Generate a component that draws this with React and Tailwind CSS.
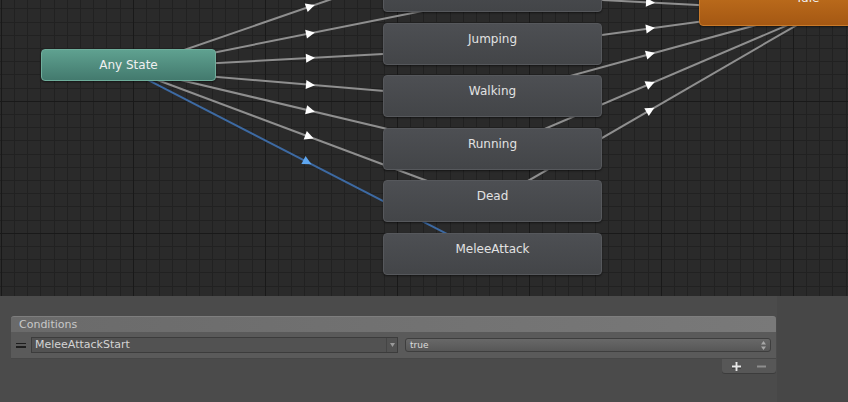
import React from "react";

const LINES = [
  // [px, py, slope, x1, x2, arrowX, color, arrowColor]
  [187, 49, -0.345, 150, 420, 310, "#8f8f8f", "#ffffff"],
  [217, 52, -0.2, 150, 440, 310, "#8f8f8f", "#ffffff"],
  [217, 63, -0.054, 150, 420, 310, "#8f8f8f", "#ffffff"],
  [217, 77, 0.084, 150, 420, 310, "#8f8f8f", "#ffffff"],
  [300, 108.3, 0.237, 150, 420, 310, "#8f8f8f", "#ffffff"],
  [160, 81, 0.374, 150, 440, 309, "#8f8f8f", "#ffffff"],
  [150, 81, 0.515, 140, 460, 307, "#3d6aa3", "#5ea6f0"],
  [602, 0, 0.052, 492, 760, 650, "#8f8f8f", "#ffffff"],
  [602, 35, -0.136, 492, 760, 650, "#8f8f8f", "#ffffff"],
  [580, 73.3, -0.274, 492, 770, 650, "#8f8f8f", "#ffffff"],
  [547, 128, -0.428, 492, 800, 650, "#8f8f8f", "#ffffff"],
  [602, 138, -0.58, 492, 805, 650, "#8f8f8f", "#ffffff"],
];

function Canvas() {
  const vx = [];
  for (let k = 0; k < 65; k++) vx.push({ x: Math.round(1.3 + 13.2 * k - 0.5), major: k % 10 === 0 });
  const hy = [];
  for (let k = -7; k < 15; k++) hy.push({ y: Math.round(101.3 + 13.2 * k - 0.5), major: k % 10 === 0 });
  const yAt = (l, x) => l[1] + l[2] * (x - l[0]);
  return (
    <svg className="absolute inset-0" width="848" height="296" viewBox="0 0 848 296">
      <g shapeRendering="crispEdges">
        {vx.filter((v) => !v.major).map((v, i) => (
          <rect key={"v" + i} x={v.x} y="0" width="1" height="296" fill="#212121" />
        ))}
        {hy.filter((v) => !v.major).map((v, i) => (
          <rect key={"h" + i} x="0" y={v.y} width="848" height="1" fill="#212121" />
        ))}
        {vx.filter((v) => v.major).map((v, i) => (
          <rect key={"V" + i} x={v.x} y="0" width="1" height="296" fill="#191919" />
        ))}
        {hy.filter((v) => v.major).map((v, i) => (
          <rect key={"H" + i} x="0" y={v.y} width="848" height="1" fill="#191919" />
        ))}
      </g>
      {LINES.map((l, i) => (
        <line
          key={"l" + i}
          x1={l[3]}
          y1={yAt(l, l[3])}
          x2={l[4]}
          y2={yAt(l, l[4])}
          stroke={l[6]}
          strokeWidth="2"
        />
      ))}
      {LINES.map((l, i) => {
        const ax = l[5];
        const ay = yAt(l, ax);
        const deg = (Math.atan(l[2]) * 180) / Math.PI;
        return (
          <polygon
            key={"a" + i}
            points="-4,-4.5 5,0 -4,4.5"
            fill={l[7]}
            transform={`translate(${ax},${ay}) rotate(${deg})`}
          />
        );
      })}
    </svg>
  );
}

function StateNode({ label, top }) {
  return (
    <div
      className="absolute left-[383px] w-[219px] h-[42px] rounded-[4px] border border-[#56585c] bg-gradient-to-b from-[#4d4f53] to-[#434548] shadow-[0_1px_2px_rgba(0,0,0,0.5)] text-center text-[12px] leading-[15px] pt-[8px] text-[#e2e2e2]"
      style={{ top }}
    >
      {label}
    </div>
  );
}

export default function App() {
  return (
    <div className="w-[848px] h-[402px] overflow-hidden flex flex-col bg-[#4b4b4b] font-['DejaVu_Sans',sans-serif]">
      <div className="relative h-[296px] shrink-0 overflow-hidden bg-[#2a2a2a]">
        <Canvas />
        <div className="absolute left-[41px] top-[49px] w-[175px] h-[32px] rounded-[4px] border border-[#6fae9c] bg-gradient-to-b from-[#5fa190] to-[#437a6e] shadow-[0_1px_2px_rgba(0,0,0,0.5)] flex items-center justify-center text-[12px] text-[#f0f0f0]">
          Any State
        </div>
        <StateNode label="" top={-30} />
        <StateNode label="Jumping" top={23} />
        <StateNode label="Walking" top={75} />
        <StateNode label="Running" top={128} />
        <StateNode label="Dead" top={180} />
        <StateNode label="MeleeAttack" top={233} />
        <div className="absolute left-[699px] top-[-16px] w-[219px] h-[42px] rounded-[4px] border border-[#c97a2a] bg-gradient-to-b from-[#c4731f] to-[#a55813] shadow-[0_1px_2px_rgba(0,0,0,0.5)] text-center text-[12px] leading-[15px] pt-[6px] text-[#f0f0f0]">
          Idle
        </div>
      </div>
      <div className="flex-1 flex">
        <div className="w-[777px] pt-[20px] pl-[11px] bg-[#4b4b4b]">
          <div className="w-[765px] flex flex-col">
            <div className="h-[16px] rounded-t-[3px] bg-gradient-to-r from-[#6a6a6a] to-[#797979] border-t border-[#7e7e7e] pl-[8px] text-[11px] leading-[15px] text-[#c8c8c8]">
              Conditions
            </div>
            <div className="h-[27px] bg-[#5a5a5a] border-b border-[#474747] flex items-center pl-[5px] pr-[5px]">
              <div className="w-[10px] flex flex-col gap-[2px]">
                <div className="h-[1.5px] bg-[#1e1e1e]" />
                <div className="h-[1.5px] bg-[#1e1e1e]" />
              </div>
              <div className="ml-[5px] w-[367px] h-[16px] flex border border-[#3c3c3c] bg-[#525252]">
                <div className="flex-1 pl-[3px] text-[11px] leading-[14px] text-[#d4d4d4]">MeleeAttackStart</div>
                <div className="w-[11px] border-l border-[#454545] flex items-center justify-center">
                  <svg width="5" height="4" viewBox="0 0 5 4">
                    <polygon points="0,0 5,0 2.5,4" fill="#9a9a9a" />
                  </svg>
                </div>
              </div>
              <div className="ml-[7px] flex-1 h-[14px] rounded-[3px] border border-[#3e3e3e] bg-gradient-to-b from-[#686868] to-[#575757] flex items-center pl-[4px] pr-[4px]">
                <div className="flex-1 text-[9px] leading-[12px] text-[#dcdcdc]">true</div>
                <svg width="5" height="9" viewBox="0 0 5 9">
                  <polygon points="2.5,0 5,3.5 0,3.5" fill="#a8a8a8" />
                  <polygon points="0,5.5 5,5.5 2.5,9" fill="#a8a8a8" />
                </svg>
              </div>
            </div>
            <div className="self-end w-[54px] h-[14px] bg-[#575757] rounded-b-[3px] shadow-[0_1px_0_#3c3c3c] flex items-center pl-[10px] gap-[16px]">
              <svg width="9" height="9" viewBox="0 0 9 9">
                <rect x="3.5" y="1" width="2" height="9" fill="#2c2c2c" />
                <rect x="0" y="4.5" width="9" height="2" fill="#2c2c2c" />
                <rect x="3.5" y="0" width="2" height="9" fill="#e8e8e8" />
                <rect x="0" y="3.5" width="9" height="2" fill="#e8e8e8" />
              </svg>
              <svg width="9" height="9" viewBox="0 0 9 9">
                <rect x="0" y="3.5" width="9" height="2" fill="#8e8e8e" />
              </svg>
            </div>
          </div>
        </div>
        <div className="flex-1 bg-[#474747]" />
      </div>
    </div>
  );
}
